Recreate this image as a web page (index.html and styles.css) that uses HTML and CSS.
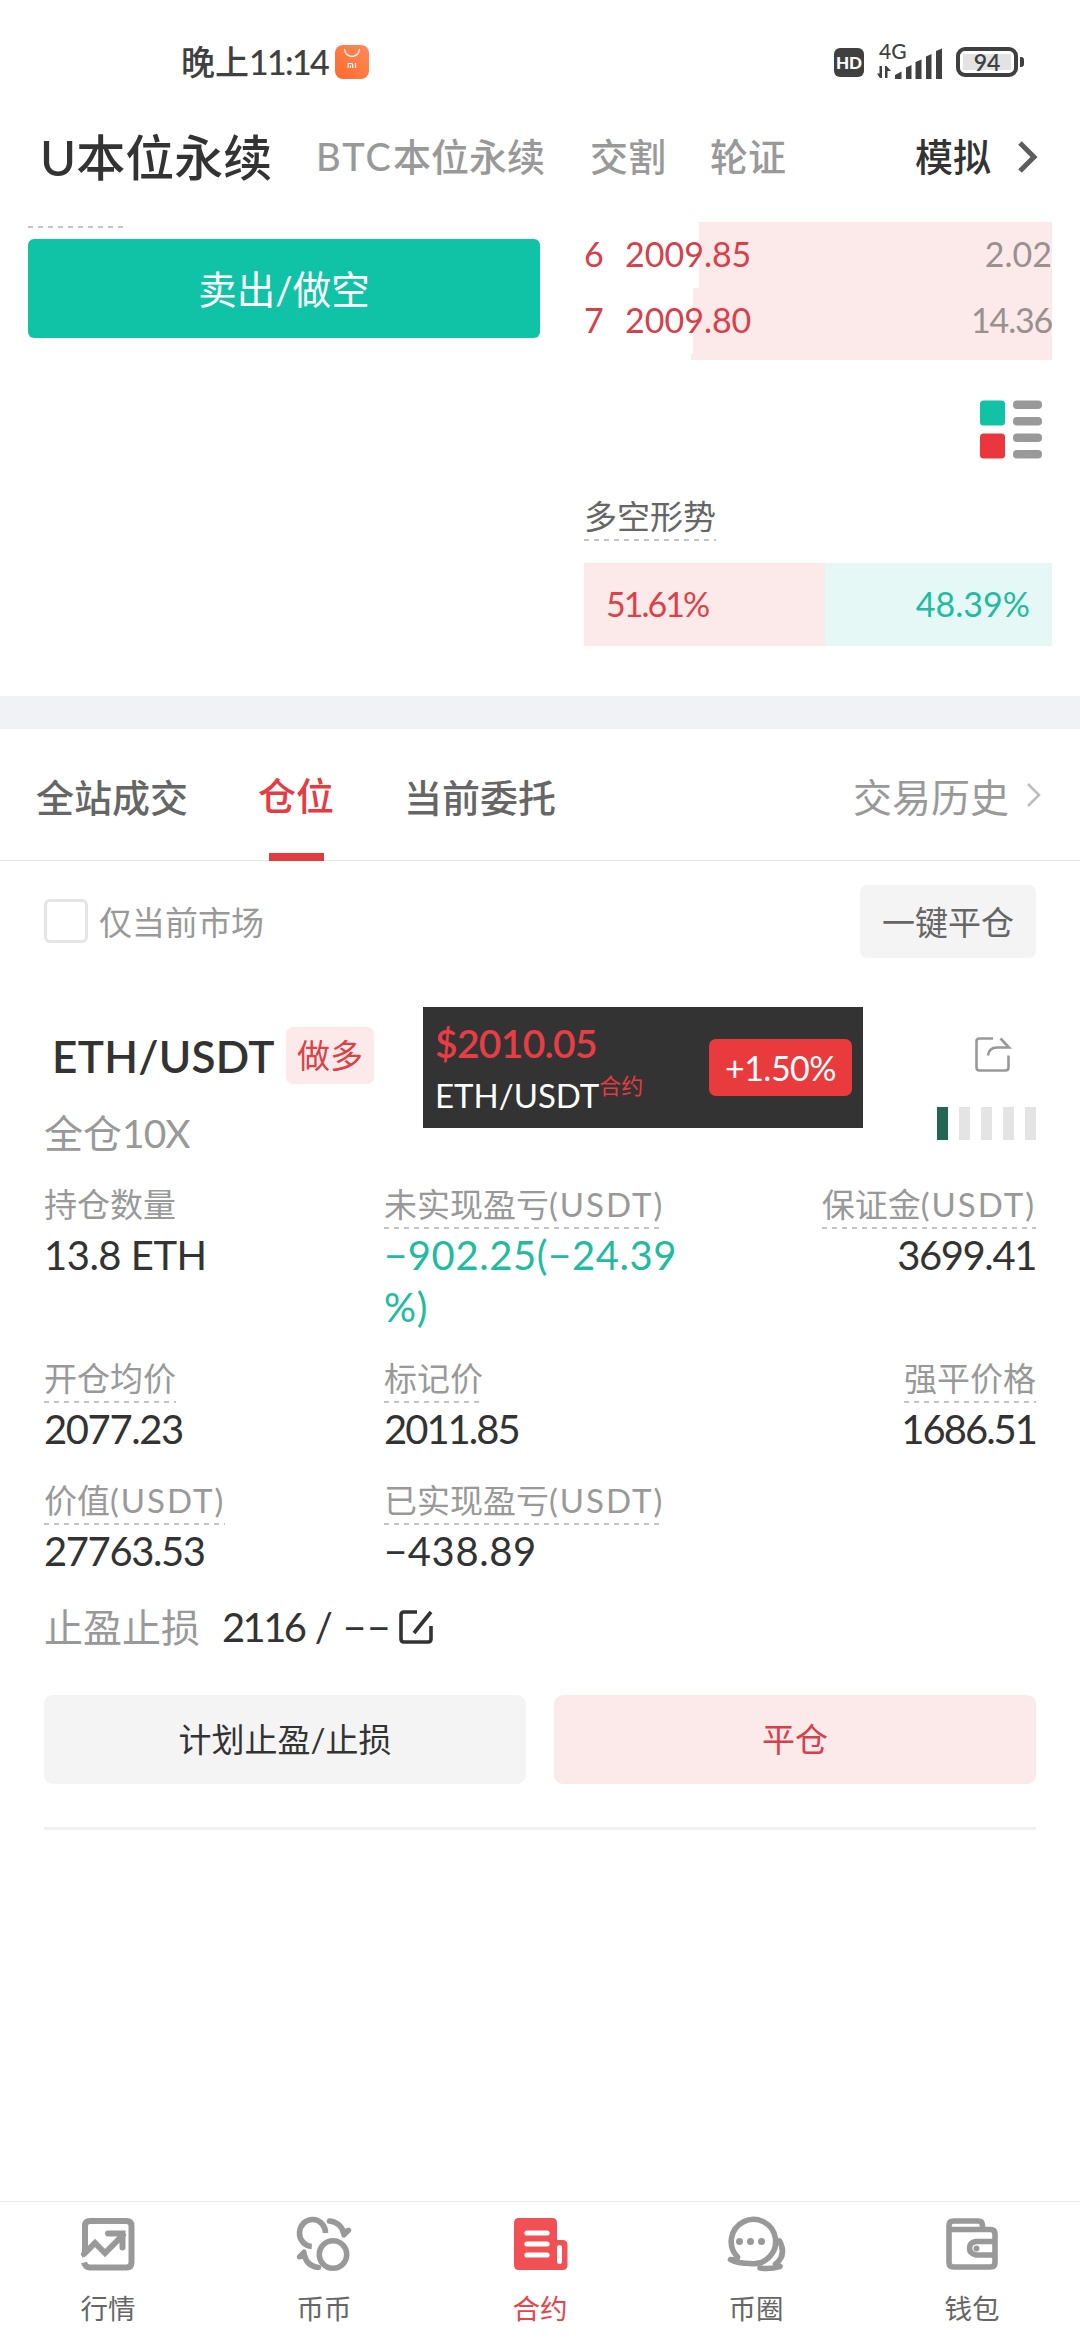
FILE: index.html
```html
<!DOCTYPE html>
<html lang="zh-CN">
<head>
<meta charset="utf-8">
<title>合约</title>
<link rel="stylesheet" href="styles.css">
</head>
<body>
<div class="app">
  <div class="status">
    <span class="clock">晚上<span class="time">11:14</span></span>
    <svg class="store" width="34" height="34" viewBox="0 0 34 34">
      <defs><linearGradient id="g" x1="1" y1="0" x2="0" y2="1"><stop offset="0" stop-color="#ff8a5c"/><stop offset="1" stop-color="#ff6a2b"/></linearGradient></defs>
      <rect width="34" height="34" rx="8" fill="url(#g)"/>
      <path d="M9.500 4a7.500 7.500 0 0 0 15 0" fill="none" stroke="#fff" stroke-width="1.300"/>
      <path d="M13.200 23v-4.500h3q1.500 0 1.500 1.500v3M15.500 20.500v2.500M20.500 18v5" fill="none" stroke="#fff" stroke-width="1.200"/>
    </svg>
    <div class="status-right">
      <span class="hd">HD</span>
      <div class="signal">
        <span class="net">4G</span>
        <svg width="68" height="34" viewBox="0 0 68 34">
          <g fill="#404040">
            <path d="M3.500 21h2.500v12h-2.200L1 28.500h2.500zM9 33V21h1.500l4.500 5h-3.500v7z"/>
            <path d="M19 34v-4l6.500-3.500v7.500zM30 34v-11.500l5.500-2.500v14zM39.500 34v-17l6-2.500v19.500zM50 34v-22.500l5.500-2.500v25zM60 34V6l6-2.500V34z"/>
          </g>
        </svg>
      </div>
      <div class="battery"><span class="battery-body"><span class="battery-fill">94</span></span><span class="battery-tip"></span></div>
    </div>
  </div>

  <div class="markets">
    <span class="market-on">U本位永续</span>
    <span class="market m-btc"><span class="btc">BTC</span>本位永续</span>
    <span class="market m-jg">交割</span>
    <span class="market m-lz">轮证</span>
    <span class="demo">模拟</span>
    <svg class="demo-arrow" width="20" height="32" viewBox="0 0 20 32"><path d="M2 2l14 14L2 30" fill="none" stroke="#5c5c5c" stroke-width="5"/></svg>
  </div>

  <div class="trade">
    <div class="order">
      <div class="order-hint dashed"></div>
      <div class="sell">卖出/做空</div>
    </div>
    <div class="book">
      <div class="ask" style="--depth:353px"><span class="lvl">6</span><span class="price">2009.85</span><span class="qty">2.02</span></div>
      <div class="ask" style="--depth:359px"><span class="lvl">7</span><span class="price">2009.80</span><span class="qty q-tight">14.36</span></div>
      <div class="ask-edge"></div>
      <svg class="depth-icon" width="64" height="60" viewBox="0 0 64 60">
        <rect x="1" y="0.500" width="25" height="25" rx="3.500" fill="#11c2a5"/>
        <rect x="1" y="33.500" width="25" height="25" rx="3.500" fill="#ea373d"/>
        <g fill="#999"><rect x="34" y="0.500" width="29" height="8.500" rx="4"/><rect x="34" y="17" width="29" height="8.500" rx="4"/><rect x="34" y="33.500" width="29" height="8.500" rx="4"/><rect x="34" y="50" width="29" height="8.500" rx="4"/></g>
      </svg>
      <span class="trend dashed">多空形势</span>
      <div class="ratio">
        <div class="long" style="width:241px">51.61%</div>
        <div class="short">48.39%</div>
      </div>
    </div>
  </div>

  <div class="band"></div>

  <div class="tabs">
    <span class="tab">全站成交</span>
    <span class="tab tab-on">仓位</span>
    <span class="tab">当前委托</span>
    <span class="history">交易历史</span>
    <svg width="16" height="26" viewBox="0 0 16 26"><path d="M2 2l11 11L2 24" fill="none" stroke="#bdbdbd" stroke-width="2.500"/></svg>
  </div>

  <div class="filter">
    <span class="checkbox"></span>
    <span class="filter-text">仅当前市场</span>
    <span class="close-all">一键平仓</span>
  </div>

  <div class="position">
    <div class="pair">
      <span class="pair-name">ETH/USDT</span>
      <span class="side">做多</span>
      <svg class="share" width="38" height="38" viewBox="0 0 38 38">
        <path d="M19 3.500H5.500q-3 0-3 3v26q0 3 3 3h26q3 0 3-3V20.500M14 20.500q1-8 9-8H35L26.500 3.500" fill="none" stroke="#999" stroke-width="2.600"/>
      </svg>
    </div>
    <div class="leverage">
      <span class="mode">全仓<span class="times">10X</span></span>
      <div class="risk"><i class="risk-on"></i><i></i><i></i><i></i><i></i></div>
    </div>
    <div class="stats">
      <div class="stat"><span class="label">持仓数量</span><span class="value v-qty">13.8 ETH</span></div>
      <div class="stat"><span class="label dashed">未实现盈亏<span class="unit">(USDT)</span></span><span class="value up v-signed">−902.25(−24.39<br>%)</span></div>
      <div class="stat end"><span class="label dashed">保证金<span class="unit">(USDT)</span></span><span class="value">3699.41</span></div>
      <div class="stat"><span class="label dashed">开仓均价</span><span class="value">2077.23</span></div>
      <div class="stat"><span class="label dashed">标记价</span><span class="value v-narrow">2011.85</span></div>
      <div class="stat end"><span class="label dashed">强平价格</span><span class="value v-narrow">1686.51</span></div>
      <div class="stat"><span class="label dashed">价值<span class="unit">(USDT)</span></span><span class="value">27763.53</span></div>
      <div class="stat"><span class="label dashed">已实现盈亏<span class="unit">(USDT)</span></span><span class="value v-signed">−438.89</span></div>
    </div>
    <div class="stops">
      <span class="mode">止盈止损</span>
      <span class="stop-value"><span class="tp">2116</span> / <span class="sl">−−</span></span>
      <svg width="36" height="36" viewBox="0 0 36 36"><path d="M19 3H6Q3 3 3 6v24q0 3 3 3h24q3 0 3-3V17M16 24L33 3" fill="none" stroke="#333" stroke-width="3.600"/></svg>
    </div>
    <div class="actions">
      <div class="btn">计划止盈/止损</div>
      <div class="btn btn-close">平仓</div>
    </div>
    <div class="ticker">
      <div class="ticker-info">
        <span class="ticker-price">$2010.05</span>
        <span class="ticker-pair">ETH/USDT<span class="ticker-tag">合约</span></span>
      </div>
      <span class="ticker-change">+1.50%</span>
    </div>
  </div>

  <div class="nav">
    <div class="nav-item">
      <svg width="62" height="62" viewBox="0 0 62 62"><g fill="none" stroke="#999" stroke-width="6"><path d="M8 41V13q0-5 5-5h36.500q5 0 5 5v36.500q0 5-5 5H13q-4.500 0-6-5"/><path d="M7 41L18 30l10 10 18-18M31 20.500h14.500V34.500" stroke-linecap="round"/></g><path d="M5 36v9l9-8z" fill="#999"/></svg>
      <span>行情</span>
    </div>
    <div class="nav-item">
      <svg width="62" height="62" viewBox="0 0 62 62"><g fill="none" stroke="#999" stroke-width="5.600"><path d="M18.800 33.500A13 13.500 0 1 1 32.500 20"/><circle cx="40" cy="41.500" r="13.700"/><path d="M36.500 8Q48 9.500 50.500 20M25.500 54.500Q14 53 11.500 42.500" stroke-linecap="round"/></g><path d="M48 17l8-2.500q3 1 2 4l-6 6q-2.500 1-3.500-1.500zM14 45.500l-8 1q-3-1-2-4l6-6q2.500-1 3.500 1.500z" fill="#999"/></svg>
      <span>币币</span>
    </div>
    <div class="nav-item nav-on">
      <svg width="62" height="62" viewBox="0 0 62 62"><path d="M10 5h33q5 0 5 5v17h5.500q5 0 5 5v20q0 5-5 5H10q-5 0-5-5V10q0-5 5-5z" fill="#f15054"/><path d="M18 20h20M18 31h20M18 42h20" stroke="#fff" stroke-width="5.200" stroke-linecap="round"/><path d="M50.500 34.500v14" stroke="#fff" stroke-width="5" stroke-linecap="round"/></svg>
      <span>合约</span>
    </div>
    <div class="nav-item">
      <svg width="62" height="62" viewBox="0 0 62 62"><g fill="none" stroke="#999" stroke-width="5.600" stroke-linecap="round" stroke-linejoin="round"><path d="M12.500 44A22.200 22.200 0 1 1 25 50.500Q13 50.500 5.500 46.500Q12 48 12.500 44"/><path d="M54.500 28Q62 42 50.500 51L55 53.500Q45 56.500 35 55"/></g><g fill="#999"><circle cx="14.500" cy="28.500" r="3.500"/><circle cx="25.500" cy="28.500" r="3.500"/><circle cx="36.500" cy="28.500" r="3.500"/></g></svg>
      <span>币圈</span>
    </div>
    <div class="nav-item">
      <svg width="62" height="62" viewBox="0 0 62 62"><g fill="none" stroke="#999" stroke-width="5.600"><path d="M7.500 16.500h42q4.500 0 4.500 4.500v28.500q0 4.500-4.500 4.500h-37q-4.500 0-4.500-4.500V12.500q0-4.500 4.500-4.500H37q4.500 0 4.500 4.500v4"/><path d="M54 28.500H35q-6.500 1-6.500 6.500t6.500 7h19"/></g><circle cx="35.500" cy="35.500" r="3" fill="#999"/></svg>
      <span>钱包</span>
    </div>
  </div>
</div>
</body>
</html>
```

FILE: styles.css
```css
* { box-sizing: border-box; }
body {
  margin: 0;
  background: #fff;
  font-family: Lato, "Noto Sans CJK SC", sans-serif;
  color: #333;
}
svg { display: block; flex: none; }
.app {
  position: relative;
  width: 1080px;
  height: 2340px;
  display: flex;
  flex-direction: column;
  overflow: hidden;
  white-space: nowrap;
}
.dashed {
  background: repeating-linear-gradient(90deg, #c4c4c4 0 5px, transparent 5px 10px) left bottom / 100% 2px no-repeat;
}

/* status bar */
.status {
  height: 124px;
  padding: 0 56px 0 181px;
  display: flex;
  align-items: center;
}
.clock { width: 154px; font-size: 34px; line-height: 48px; color: #404040; font-weight: 500; }
.time { letter-spacing: -1.700px; }
.status-right { margin-left: auto; display: flex; align-items: center; }
.hd {
  width: 30px;
  height: 29px;
  border-radius: 6px;
  background: #404040;
  color: #fff;
  font: 900 17px/29px Lato, sans-serif;
  text-align: center;
}
.signal { position: relative; width: 68px; height: 34px; margin: 0 12px; }
.net { position: absolute; left: 3px; top: -4px; font: 500 21px/20px Lato, sans-serif; color: #404040; }
.battery { display: flex; align-items: center; gap: 2px; }
.battery-body { width: 62px; height: 30px; border: 4px solid #404040; border-radius: 9px; padding: 3px; }
.battery-fill { display: block; height: 16px; background: #e3e3e3; font: 600 23px/16px Lato, sans-serif; text-align: center; color: #404040; }
.battery-tip { width: 4px; height: 10px; border-radius: 0 3px 3px 0; background: #404040; }

/* market switcher */
.markets {
  height: 98px;
  padding: 0 42px 37px 40px;
  display: flex;
  align-items: center;
  font-weight: 500;
  font-size: 38px;
}
.market-on { width: 276px; font-size: 49px; }
.market { color: #999; }
.btc { letter-spacing: 2px; }
.m-btc { width: 274px; }
.m-jg { width: 120px; }
.m-lz { width: 205px; }
.demo { width: 103px; }
.demo-arrow { margin-top: 4px; }

/* order form and order book */
.trade { height: 474px; padding: 0 28px; display: flex; justify-content: space-between; }
.order { width: 512px; padding-top: 4px; }
.order-hint { width: 97px; height: 2px; }
.sell {
  margin-top: 11px;
  height: 99px;
  border-radius: 6px;
  background: #11c3a6;
  color: #fff;
  font-size: 38.500px;
  line-height: 101px;
  text-align: center;
}
.book { width: 468px; display: flex; flex-direction: column; }
.ask {
  height: 66px;
  padding-bottom: 3px;
  display: flex;
  align-items: center;
  font-size: 34px;
  color: #d6404a;
  background: linear-gradient(#fceaea, #fceaea) right / var(--depth) 100% no-repeat;
}
.lvl { width: 41px; }
.qty { margin-left: auto; color: #999090; }
.q-tight { letter-spacing: -1.200px; }
.ask-edge { height: 6px; width: 361px; align-self: flex-end; background: #fceaea; }
.depth-icon { align-self: flex-end; margin: 40px 9px 0 0; }
.trend { align-self: flex-start; margin-top: 34px; height: 47px; font-size: 33px; line-height: 44px; color: #666; }
.ratio { margin-top: 22px; height: 83px; display: flex; font-size: 34px; line-height: 82px; }
.long { padding-left: 22px; background: #fceaea; color: #dd4148; letter-spacing: -2px; }
.short { flex: 1; padding-right: 22px; text-align: right; background: #e5f8f5; color: #22bb9f; }
.band { height: 33px; background: #f0f2f5; }

/* position tabs */
.tabs {
  height: 132px;
  padding: 1px 38px 0 36px;
  display: flex;
  align-items: center;
  gap: 70px;
  border-bottom: 1px solid #e3e3e3;
  font-size: 38px;
  font-weight: 500;
  color: #666;
}
.tab-on {
  align-self: stretch;
  line-height: 130px;
  color: #e53b42;
  margin-bottom: -1px;
  background: linear-gradient(#e03c42, #e03c42) center bottom / 55px 8px no-repeat;
}
.history { margin-left: auto; margin-right: -53px; font-size: 39px; font-weight: 400; color: #999; }

/* filter row */
.filter { height: 122px; padding: 0 44px 2px; display: flex; align-items: center; font-size: 33px; }
.checkbox { width: 44px; height: 44px; border: 3px solid #e5e5e5; border-radius: 6px; }
.filter-text { margin-left: 11px; color: #999; }
.close-all {
  margin-left: auto;
  width: 176px;
  height: 73px;
  border-radius: 7px;
  background: #f4f4f4;
  color: #666;
  line-height: 74px;
  text-align: center;
}

/* position card */
.position { position: relative; margin: 0 44px; padding-top: 44px; border-bottom: 3px solid #f1f1f1; height: 847px; }
.pair { height: 57px; display: flex; align-items: center; padding-left: 8px; }
.pair-name { width: 234px; font-size: 44px; font-weight: 600; letter-spacing: 0.300px; }
.side {
  width: 88px;
  height: 57px;
  border-radius: 7px;
  background: #fceaea;
  color: #dd4148;
  font-size: 33px;
  line-height: 57px;
  text-align: center;
}
.share { margin-left: auto; margin-right: 24px; margin-bottom: 3px; }
.leverage { height: 98px; display: flex; justify-content: space-between; padding-top: 20px; }
.mode { font-size: 39px; line-height: 58px; color: #999; }
.times { letter-spacing: -1px; }
.risk { display: flex; gap: 11px; padding-top: 3px; }
.risk i { width: 11px; height: 33px; background: #e4e4e4; }
.risk .risk-on { background: #226753; }
.stats { display: grid; grid-template-columns: 340px 330px 322px; }
.stat { display: flex; flex-direction: column; align-items: flex-start; padding-bottom: 23px; }
.end { align-items: flex-end; }
.label { height: 47px; font-size: 33px; line-height: 44px; color: #999; }
.unit { letter-spacing: 2px; }
.value { font-size: 40px; line-height: 52px; letter-spacing: -1.400px; }
.v-narrow { letter-spacing: -2px; }
.v-qty { letter-spacing: -0.500px; }
.v-signed { letter-spacing: 0.600px; }
.up { color: #22bb9f; }
.stops { height: 53px; display: flex; align-items: center; }
.stop-value { width: 176px; margin-left: 22px; font-size: 40px; }
.tp { letter-spacing: -2.600px; }
.sl { letter-spacing: 1px; }
.actions { display: flex; gap: 28px; margin-top: 42px; }
.btn { flex: 1; height: 89px; border-radius: 9px; background: #f4f4f4; font-size: 33px; line-height: 89px; text-align: center; }
.btn-close { background: #fceaea; color: #d6404a; }

/* floating price ticker */
.ticker {
  position: absolute;
  left: 379px;
  top: 24px;
  width: 440px;
  height: 121px;
  padding: 10px 11px 0 12px;
  display: flex;
  justify-content: space-between;
  background: #333;
}
.ticker-info { display: flex; flex-direction: column; }
.ticker-price { font-size: 39px; line-height: 52px; font-weight: 600; letter-spacing: -0.700px; color: #e93d45; }
.ticker-pair { font-size: 33px; line-height: 52px; color: #fff; }
.ticker-tag { font-size: 22px; vertical-align: 14px; line-height: 1; color: #e03c42; }
.ticker-change { width: 143px; height: 57px; margin-top: 22px; border-radius: 7px; background: #e93b3d; color: #fff; font-size: 34px; letter-spacing: -0.500px; line-height: 57px; text-align: center; }

/* bottom navigation */
.nav { margin-top: auto; height: 139px; border-top: 1px solid #ebebeb; display: flex; }
.nav-item { width: 216px; padding-top: 11px; display: flex; flex-direction: column; align-items: center; font-size: 27.500px; line-height: 40px; color: #666; }
.nav-item span { margin-top: 14px; }
.nav-on { color: #e9434a; }
```
